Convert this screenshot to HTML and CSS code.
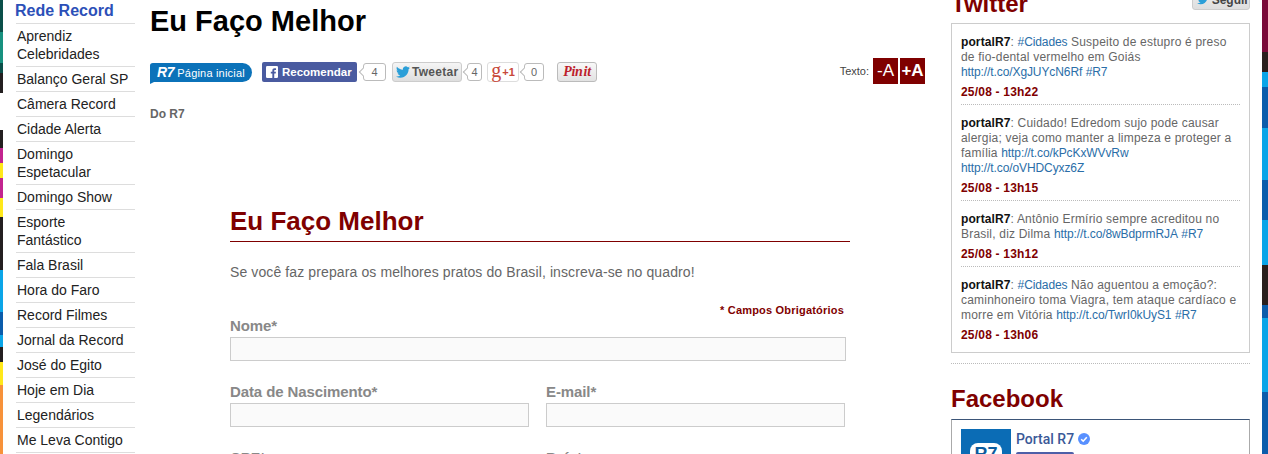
FILE: index.html
```html
<!DOCTYPE html>
<html>

<head>
  <title>Eu Faço Melhor</title>
  <link rel="stylesheet" href="styles.css">
</head>

<body>
  <svg class="icon-defs" width="0" height="0">
    <symbol id="bird" viewBox="0 0 24 24">
      <path d="M23.953 4.57a10 10 0 01-2.825.775 4.958 4.958 0 002.163-2.723c-.951.555-2.005.959-3.127 1.184a4.92 4.92 0 00-8.384 4.482C7.69 8.095 4.067 6.13 1.64 3.162a4.822 4.822 0 00-.666 2.475c0 1.71.87 3.213 2.188 4.096a4.904 4.904 0 01-2.228-.616v.06a4.923 4.923 0 003.946 4.827 4.996 4.996 0 01-2.212.085 4.936 4.936 0 004.604 3.417 9.867 9.867 0 01-6.102 2.105c-.39 0-.779-.023-1.17-.067a13.995 13.995 0 007.557 2.209c9.053 0 13.998-7.496 13.998-13.985 0-.21 0-.42-.015-.63A9.935 9.935 0 0024 4.59z" />
    </symbol>
  </svg>

  <div class="page">
    <nav class="network">
      <h3 class="network-title">Rede Record</h3>
      <ul class="network-list">
        <li>Aprendiz Celebridades</li>
        <li>Balanço Geral SP</li>
        <li>Câmera Record</li>
        <li>Cidade Alerta</li>
        <li>Domingo Espetacular</li>
        <li>Domingo Show</li>
        <li>Esporte Fantástico</li>
        <li>Fala Brasil</li>
        <li>Hora do Faro</li>
        <li>Record Filmes</li>
        <li>Jornal da Record</li>
        <li>José do Egito</li>
        <li>Hoje em Dia</li>
        <li>Legendários</li>
        <li>Me Leva Contigo</li>
      </ul>
    </nav>

    <main class="article">
      <h1 class="article-title">Eu Faço Melhor</h1>

      <div class="share">
        <a class="btn-r7"><b>R7</b> Página inicial</a>
        <a class="btn-fb">
          <svg class="fb-mark" viewBox="0 0 14 14">
            <rect width="14" height="14" rx="1.5" fill="#fff" />
            <path d="M9.6 14V8.8h1.7l.3-2H9.6V5.6c0-.6.2-1 1-1h1.1V2.8c-.2 0-.9-.1-1.6-.1-1.6 0-2.7 1-2.7 2.7v1.4H5.6v2h1.8V14z" fill="#4a5ba0" />
          </svg>
          Recomendar
        </a>
        <span class="count count-fb">4</span>
        <a class="btn-tw"><svg class="bird"><use href="#bird" /></svg>Tweetar</a>
        <span class="count count-tw">4</span>
        <a class="btn-gplus"><span class="gplus-g">g</span>+1</a>
        <span class="count count-gplus">0</span>
        <a class="btn-pin">Pin<i>it</i></a>
        <div class="text-size">
          <span class="text-size-label">Texto:</span>
          <a class="size-btn size-minus">-A</a>
          <a class="size-btn">+A</a>
        </div>
      </div>

      <p class="byline">Do R7</p>

      <section class="signup">
        <h2 class="signup-title">Eu Faço Melhor</h2>
        <p class="signup-intro">Se você faz prepara os melhores pratos do Brasil, inscreva-se no quadro!</p>
        <p class="required">* Campos Obrigatórios</p>
        <form class="signup-form">
          <div class="field field-wide">
            <label>Nome*</label>
            <input type="text">
          </div>
          <div class="field">
            <label>Data de Nascimento*</label>
            <input type="text">
          </div>
          <div class="field">
            <label>E-mail*</label>
            <input type="text">
          </div>
          <div class="field">
            <label>CPF*</label>
            <input type="text">
          </div>
          <div class="field">
            <label>País*</label>
            <input type="text">
          </div>
        </form>
      </section>
    </main>

    <aside class="sidebar">
      <div class="side-head">
        <h2 class="side-title side-title-tw">Twitter</h2>
        <a class="btn-follow"><svg class="bird bird-follow"><use href="#bird" /></svg>Seguir</a>
      </div>
      <div class="tweets">
        <div class="tweet">
          <p><b>portalR7</b>: <a>#Cidades</a> Suspeito de estupro é preso de fio-dental vermelho em Goiás <a>http://t.co/XgJUYcN6Rf</a> <a>#R7</a></p>
          <span class="tweet-date">25/08 - 13h22</span>
        </div>
        <div class="tweet">
          <p><b>portalR7</b>: Cuidado! Edredom sujo pode causar alergia; veja como manter a limpeza e proteger a família <a>http://t.co/kPcKxWVvRw</a> <a>http://t.co/oVHDCyxz6Z</a></p>
          <span class="tweet-date">25/08 - 13h15</span>
        </div>
        <div class="tweet">
          <p><b>portalR7</b>: Antônio Ermírio sempre acreditou no Brasil, diz Dilma <a>http://t.co/8wBdprmRJA</a> <a>#R7</a></p>
          <span class="tweet-date">25/08 - 13h12</span>
        </div>
        <div class="tweet">
          <p><b>portalR7</b>: <a>#Cidades</a> Não aguentou a emoção?: caminhoneiro toma Viagra, tem ataque cardíaco e morre em Vitória <a>http://t.co/TwrI0kUyS1</a> <a>#R7</a></p>
          <span class="tweet-date">25/08 - 13h06</span>
        </div>
      </div>

      <h2 class="side-title side-title-fb">Facebook</h2>
      <div class="fb-box">
        <div class="fb-logo"><span class="fb-logo-mark">R7</span></div>
        <div class="fb-info">
          <div class="fb-name">
            Portal R7
            <svg class="fb-check" viewBox="0 0 12 12">
              <circle cx="6" cy="6" r="6" fill="#5890ff" />
              <path d="M3.2 6.2l2 2 3.6-4" fill="none" stroke="#fff" stroke-width="1.6" />
            </svg>
          </div>
          <a class="fb-like"></a>
        </div>
      </div>
    </aside>
  </div>
</body>

</html>
```

FILE: styles.css
```css
html,
body {
  margin: 0;
  height: 454px;
  overflow: hidden;
}

/* site wallpaper, only its edges show either side of the page */
body {
  font-family: "Liberation Sans", Arial, sans-serif;
  background-color: #fff;
  background-repeat: no-repeat;
  background-position: 0 0, 100% 0;
  background-size: 3px 454px, 6px 454px;
  background-image:
    linear-gradient(#0b4f49 0 32px, #17917f 32px 63px, #0b4f49 63px 73px, #231f20 73px 93px,
      #fff 93px 130px, #231f20 130px 148px, #c2248f 148px 163px, #ffe81a 163px 178px,
      #c2248f 178px 198px, #ffe81a 198px 217px, #231f20 217px 270px, #0aa5e8 270px 312px,
      #0b5cab 312px 335px, #0aa5e8 335px 347px, #231f20 347px 362px, #ffe81a 362px 385px,
      #f7923a 385px),
    linear-gradient(#7a0a38 0 52px, #2a1f1c 52px 72px, #0aa5e8 72px 87px, #0b5cab 87px 128px,
      #0aa5e8 128px 180px, #0b5cab 180px 220px, #0aa5e8 220px 265px, #2a1f1c 265px 305px,
      #0b5cab 305px 318px, #0aa5e8 318px 392px, #0b5cab 392px);
}

.icon-defs {
  display: block;
}

.page {
  display: flex;
  padding-left: 16px;
}

/* left menu */
.network {
  width: 119px;
  margin-right: 15px;
  flex: none;
}

.network-title {
  margin: 0 0 0 -1px;
  height: 23px;
  font-size: 16px;
  line-height: 21px;
  font-weight: bold;
  color: #2c50b8;
}

.network-list {
  list-style-type: none;
  margin: 0;
  padding: 0;
  border-top: 1px solid #ddd;
}

.network-list li {
  padding: 3px 4px 3px 1px;
  font-size: 14px;
  line-height: 18px;
  color: #222;
  border-bottom: 1px solid #ddd;
}

/* article column */
.article {
  width: 775px;
  flex: none;
}

.article-title {
  margin: 0;
  padding-top: 5px;
  font-size: 29px;
  line-height: 33px;
  color: #000;
}

.share {
  display: flex;
  align-items: center;
  height: 26px;
  margin-top: 20px;
}

.share > a,
.share > .count {
  margin-top: 2px;
}

.btn-r7 {
  position: relative;
  display: block;
  width: 102px;
  height: 19px;
  margin-right: 10px;
  background-color: #0b72b9;
  border-radius: 3px 10px 10px 0;
  color: #fff;
  font-size: 11px;
  letter-spacing: .2px;
  line-height: 19px;
  text-align: center;
}

.btn-r7::after {
  content: "";
  position: absolute;
  left: 0;
  top: 19px;
  border-top: 2px solid #0b72b9;
  border-right: 4px solid transparent;
}

.btn-r7 b {
  font-size: 14px;
  font-style: italic;
  letter-spacing: -.5px;
}

.btn-fb {
  display: flex;
  align-items: center;
  gap: 4px;
  width: 95px;
  height: 20px;
  box-sizing: border-box;
  padding-left: 4px;
  background-color: #4a5ba0;
  border-radius: 2px;
  color: #fff;
  font-size: 11.5px;
  font-weight: bold;
}

.fb-mark {
  width: 12px;
  height: 12px;
}

.count {
  position: relative;
  display: block;
  height: 18px;
  box-sizing: border-box;
  border: 1px solid #bbb;
  border-radius: 3px;
  background-color: #fff;
  color: #666;
  font-size: 11px;
  line-height: 16px;
  text-align: center;
}

/* little arrow pointing at the button */
.count::before {
  content: "";
  position: absolute;
  left: -4px;
  top: 5px;
  width: 5px;
  height: 5px;
  background-color: #fff;
  border-left: 1px solid #bbb;
  border-bottom: 1px solid #bbb;
  transform: rotate(45deg);
}

.count-fb {
  width: 23px;
  margin-left: 6px;
  margin-right: 6px;
}

.btn-tw {
  display: flex;
  align-items: center;
  gap: 2px;
  width: 70px;
  height: 20px;
  box-sizing: border-box;
  padding-left: 3px;
  background-image: linear-gradient(#f5f5f5, #dedede);
  border: 1px solid #ccc;
  border-radius: 3px;
  color: #555;
  font-size: 12px;
  font-weight: bold;
  letter-spacing: .3px;
}

.bird {
  width: 14px;
  height: 14px;
  fill: #2b9fd8;
}

.count-tw {
  width: 15px;
  margin-left: 5px;
  margin-right: 5px;
}

.btn-gplus {
  display: flex;
  align-items: center;
  justify-content: center;
  gap: 1px;
  width: 32px;
  height: 20px;
  box-sizing: border-box;
  border: 1px solid #ddd;
  border-radius: 3px;
  background-color: #fff;
  color: #c8483a;
  font-size: 11px;
  font-weight: bold;
  line-height: 17px;
}

.gplus-g {
  font-family: "Liberation Serif", serif;
  font-size: 20px;
  font-weight: normal;
  margin-top: -4px;
}

.count-gplus {
  width: 20px;
  margin-left: 5px;
  margin-right: 13px;
}

.btn-pin {
  display: block;
  width: 40px;
  height: 20px;
  box-sizing: border-box;
  background-image: linear-gradient(#f8f8f8, #e2e2e2);
  border: 1px solid #bbb;
  border-radius: 3px;
  color: #bd1e2c;
  font-family: "Liberation Serif", serif;
  font-size: 14px;
  font-style: italic;
  font-weight: bold;
  letter-spacing: -.3px;
  line-height: 18px;
  text-align: center;
}

.btn-pin i {
  margin-left: 1px;
}

.text-size {
  display: flex;
  align-items: center;
  gap: 2px;
  margin-left: auto;
}

.text-size-label {
  margin-right: 2px;
  font-size: 11px;
  color: #444;
}

.size-btn {
  display: block;
  width: 25px;
  height: 26px;
  background-color: #7f0000;
  color: #fff;
  font-size: 17px;
  font-weight: bold;
  line-height: 26px;
  text-align: center;
}

.size-minus {
  font-weight: normal;
}

.byline {
  margin: 23px 0 0;
  font-size: 12px;
  line-height: 14px;
  font-weight: bold;
  color: #666;
}

.signup {
  width: 620px;
  margin: 85px 0 0 80px;
}

.signup-title {
  margin: 0;
  padding-bottom: 5px;
  font-size: 26px;
  line-height: 30px;
  color: #7f0000;
  border-bottom: 1px solid #7f0000;
}

.signup-intro {
  margin: 21px 0 0;
  font-size: 14px;
  letter-spacing: .11px;
  line-height: 18px;
  color: #666;
}

.required {
  margin: 22px 6px -1px 0;
  font-size: 11px;
  letter-spacing: .2px;
  line-height: 14px;
  font-weight: bold;
  color: #7f0000;
  text-align: right;
}

.signup-form {
  display: grid;
  grid-template-columns: 299px 299px;
  column-gap: 17px;
  row-gap: 21px;
}

.field {
  display: flex;
  flex-direction: column;
}

.field-wide {
  grid-column: 1 / 3;
}

.field label {
  margin-bottom: 1px;
  font-size: 15px;
  letter-spacing: -.1px;
  line-height: 20px;
  font-weight: bold;
  color: #888;
}

.field input {
  width: 100%;
  height: 24px;
  box-sizing: border-box;
  margin: 0;
  padding: 0;
  background-color: #fafafa;
  border: 1px solid #ccc;
}

.field-wide input {
  width: 616px;
}

/* right column */
.sidebar {
  width: 299px;
  margin: -19px 0 0 26px;
  flex: none;
}

.side-head {
  display: flex;
  justify-content: space-between;
  height: 42px;
}

.side-title {
  margin: 0;
  font-size: 24px;
  line-height: 32px;
  font-weight: bold;
  color: #7f0000;
}

.side-title-tw {
  padding-top: 7px;
}

.btn-follow {
  display: flex;
  align-items: flex-end;
  gap: 3px;
  width: 58px;
  height: 29px;
  box-sizing: border-box;
  padding: 0 0 2px 4px;
  background-image: linear-gradient(#f5f5f5, #dedede);
  border: 1px solid #ccc;
  border-radius: 3px;
  color: #444;
  font-size: 12px;
  font-weight: bold;
}

.bird-follow {
  width: 15px;
  height: 15px;
}

.tweets {
  box-sizing: border-box;
  height: 330px;
  padding: 11px 9px 0;
  border: 1px solid #ccc;
}

.tweet {
  margin-bottom: 11px;
  padding-bottom: 4px;
  border-bottom: 1px dotted #bbb;
  font-size: 12px;
  letter-spacing: .2px;
  line-height: 15px;
  color: #666;
}

.tweet:last-child {
  border-bottom: 0;
}

.tweet p {
  margin: 0 0 5px;
}

.tweet b {
  color: #111;
  letter-spacing: .1px;
}

.tweet a {
  color: #2a6ea8;
  letter-spacing: -.1px;
}

.tweet-date {
  display: block;
  font-weight: bold;
  color: #7f0000;
}

.side-title-fb {
  margin-top: 10px;
  padding-top: 19px;
  border-top: 1px dotted #bbb;
}

.fb-box {
  display: flex;
  gap: 5px;
  height: 60px;
  margin-top: 4px;
  padding: 9px 9px;
  border: 1px solid #aaa;
  border-top-color: #3b5578;
}

.fb-logo {
  width: 50px;
  height: 50px;
  padding-top: 14px;
  box-sizing: border-box;
  background-color: #0b6cb5;
  flex: none;
}

.fb-logo-mark {
  display: block;
  width: 32px;
  height: 30px;
  margin: 0 auto;
  background-color: #fff;
  border-radius: 8px;
  color: #0b5c9e;
  font-size: 18px;
  font-weight: bold;
  line-height: 22px;
  text-align: center;
}

.fb-name {
  display: flex;
  align-items: center;
  gap: 4px;
  font-family: Roboto, "Liberation Sans", sans-serif;
  font-size: 14px;
  font-weight: 500;
  line-height: 20px;
  color: #3b5998;
}

.fb-check {
  width: 12px;
  height: 12px;
}

.fb-like {
  display: block;
  width: 58px;
  height: 20px;
  margin-top: 3px;
  background-color: #4e5fa8;
  border-radius: 2px;
}
```
